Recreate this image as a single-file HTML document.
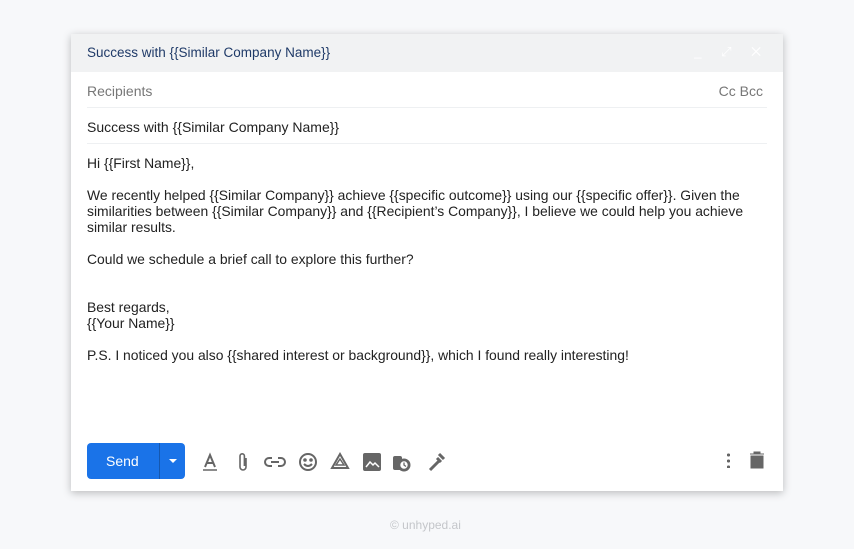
<!DOCTYPE html>
<html><head><meta charset="utf-8"><style>
body{margin:0;width:854px;height:549px;background:#f7f8fa;font-family:"Liberation Sans",sans-serif;position:relative;overflow:hidden}
.card{position:absolute;left:71px;top:34px;width:712px;height:457px;background:#fff;box-shadow:0 2px 8px rgba(0,0,0,.25)}
.hd{height:38px;background:#f1f2f3;position:relative}
.hd .t{position:absolute;left:16px;top:11px;font-size:13.5px;color:#1f3a68;font-weight:normal}
.row{position:absolute;left:16px;right:16px;border-bottom:1px solid #eef0f2;font-size:14px}
.body{position:absolute;left:16px;top:121px;font-size:13.9px;line-height:16px;color:#222;white-space:nowrap}
.send{position:absolute;left:16px;top:409px;width:98px;height:36px;background:#1a73e8;border-radius:4px;color:#fff;font-size:14px}
.ic{position:absolute;top:417px}
</style></head><body>
<div class="card">
<div class="hd"><div class="t">Success with {{Similar Company Name}}</div>
<div style="position:absolute;right:14px;top:10px;color:#fff;font-size:13px;letter-spacing:8px">_ ⤢ ✕</div></div>
<div class="row" style="top:38px;height:35px"><span style="position:absolute;top:11px;color:#777">Recipients</span><span style="position:absolute;right:4px;top:11px;color:#777">Cc Bcc</span></div>
<div class="row" style="top:74px;height:35px"><span style="position:absolute;top:11px;color:#222">Success with {{Similar Company Name}}</span></div>
<div class="body">Hi {{First Name}},<br><br>We recently helped {{Similar Company}} achieve {{specific outcome}} using our {{specific offer}}. Given the<br>similarities between {{Similar Company}} and {{Recipient’s Company}}, I believe we could help you achieve<br>similar results.<br><br>Could we schedule a brief call to explore this further?<br><br><br>Best regards,<br>{{Your Name}}<br><br>P.S. I noticed you also {{shared interest or background}}, which I found really interesting!</div>
<div class="send"><span style="position:absolute;left:19px;top:10px">Send</span><div style="position:absolute;left:72px;top:0;width:1px;height:36px;background:#1558b0"></div><div style="position:absolute;left:82px;top:16px;border:4px solid transparent;border-top:4px solid #fff;border-bottom:0"></div></div>
<svg class="ic" style="left:128px" width="280" height="22" viewBox="0 0 280 22" fill="none" stroke="#666" stroke-width="2">
<path d="M6 16 L11 4 L16 16 M8 12 H14"/><path d="M4 19 H18" stroke-width="1.5"/>
<path d="M47 7 V16 a3 3 0 0 1 -6 0 V5 a2.2 2.2 0 0 1 4.4 0 V15" stroke-width="1.6"/>
<path d="M73 7 h-3 a4 4 0 0 0 0 8 h3 M79 7 h3 a4 4 0 0 1 0 8 h-3 M72 11 h8"/>
<circle cx="109" cy="11" r="8"/><circle cx="106" cy="9" r=".8" fill="#666"/><circle cx="112" cy="9" r=".8" fill="#666"/><path d="M105 13 q4 4 8 0"/>
<path d="M141 3 L149 17 H133 Z"/><path d="M141 8 L145 14 H137 Z" stroke-width="1.5"/>
<rect x="165" y="3" width="16" height="16" rx="1" fill="#666"/><path d="M167 16 l4-5 3 3 2-2 4 4" stroke="#fff" stroke-width="1.5"/>
<rect x="194" y="5" width="9" height="14" rx="2" fill="#666" stroke="none"/><circle cx="205" cy="14" r="5.5" fill="#fff"/><circle cx="205" cy="14" r="4.5" stroke-width="1.6"/><path d="M205 11.5 V14 L207 15.5" stroke-width="1.3"/>
<path d="M231 19 l10-10" stroke-width="3"/><path d="M238 7 l4 4 M240 3 l5 5" stroke-width="3"/>
</svg>
<div style="position:absolute;left:656px;top:418px;width:3px;height:16px;background:radial-gradient(circle,#666 1.5px,transparent 1.6px) 0 0/3px 6px"></div>
<svg style="position:absolute;left:678px;top:417px" width="16" height="18"><path d="M1 3 H15 M5 3 V1 H11 V3 M2 5 H14 V17 H2 Z" fill="#666" stroke="#666"/></svg>
</div>
<div style="position:absolute;left:390px;top:518px;font-size:12px;color:#c4c6ca">© unhyped.ai</div>
</body></html>
